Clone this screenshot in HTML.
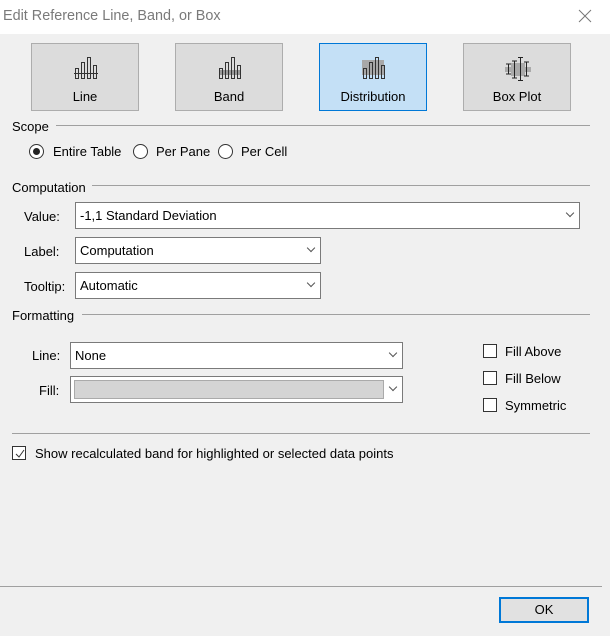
<!DOCTYPE html>
<html><head><style>
*{margin:0;padding:0;box-sizing:border-box}
body{width:610px;height:636px;background:#f0f0f0;font-family:"Liberation Sans",sans-serif;font-size:13px;color:#000;position:relative;overflow:hidden}
.a{position:absolute}
.title{left:0;top:0;width:610px;height:34px;background:#fff;}
.title span{position:absolute;left:3px;top:8px;font-size:14.4px;color:#7a7a7a}
.btn{position:absolute;top:43px;width:108px;height:68px;background:#dcdcdc;border:1px solid #adadad;text-align:center}
.btn .l{position:absolute;left:0;right:0;top:45px;font-size:13px}
.btn svg{position:absolute;left:41px;top:13px}
.sel{background:#c4e0f6;border:1px solid #0078d7}
.hd{font-size:13px}
.hr{height:1px;background:#a0a0a0}
.box{position:absolute;background:#fff;border:1px solid #7a7a7a;height:27px;padding:5px 4px;font-size:13px}
.box i{position:absolute;right:6px;top:7px;width:6px;height:6px;border-right:1px solid #555;border-bottom:1px solid #555;transform:rotate(45deg)}
.cb{position:absolute;width:14px;height:14px;border:1px solid #333;background:#fff}
.rb{position:absolute;width:15px;height:15px;border:1px solid #333;border-radius:50%;background:#fff}
</style></head><body>
<div class="a title"><span>Edit Reference Line, Band, or Box</span>
<svg class="a" style="left:578px;top:9px" width="14" height="14"><path d="M1 1L13 13M13 1L1 13" stroke="#777" stroke-width="1"/></svg></div>

<div class="btn" style="left:31px"><svg width="26" height="24"><g fill="none" stroke="#333"><rect x="2.5" y="11.5" width="3" height="10"/><rect x="8.5" y="5.5" width="3" height="16"/><rect x="14.5" y="0.5" width="3" height="21"/><rect x="20.5" y="8.5" width="3" height="13"/><path d="M1 16.5H25"/></g></svg><div class="l">Line</div></div>
<div class="btn" style="left:175px"><svg width="26" height="24"><rect x="2" y="13" width="22" height="5" fill="#999"/><g fill="none" stroke="#333"><rect x="2.5" y="11.5" width="3" height="10"/><rect x="8.5" y="5.5" width="3" height="16"/><rect x="14.5" y="0.5" width="3" height="21"/><rect x="20.5" y="8.5" width="3" height="13"/></g></svg><div class="l">Band</div></div>
<div class="btn sel" style="left:319px"><svg width="26" height="24"><rect x="1" y="3" width="22" height="15" fill="#a8a8a8"/><g fill="none" stroke="#333"><rect x="2.5" y="11.5" width="3" height="10"/><rect x="8.5" y="5.5" width="3" height="16"/><rect x="14.5" y="0.5" width="3" height="21"/><rect x="20.5" y="8.5" width="3" height="13"/></g></svg><div class="l">Distribution</div></div>
<div class="btn" style="left:463px"><svg width="26" height="24"><g fill="#aaa"><rect x="0" y="10" width="26" height="5"/><rect x="6" y="6" width="14" height="13"/></g><g stroke="#222" fill="none"><path d="M3.5 7V17M1 7H6M1 17H6M9.5 4V21M7 4H12M7 21H12M15.5 0V24M13 0.5H18M13 23.5H18M21.5 5V19M19 5H24M19 19H24"/></g></svg><div class="l">Box Plot</div></div>

<div class="a hd" style="left:12px;top:119px">Scope</div>
<div class="a hr" style="left:56px;top:125px;width:534px"></div>
<div class="rb" style="left:29px;top:144px"><div class="a" style="left:3px;top:3px;width:7px;height:7px;border-radius:50%;background:#222"></div></div>
<div class="a" style="left:53px;top:144px">Entire Table</div>
<div class="rb" style="left:133px;top:144px"></div>
<div class="a" style="left:156px;top:144px">Per Pane</div>
<div class="rb" style="left:218px;top:144px"></div>
<div class="a" style="left:241px;top:144px">Per Cell</div>

<div class="a hd" style="left:12px;top:180px">Computation</div>
<div class="a hr" style="left:92px;top:185px;width:498px"></div>
<div class="a" style="left:24px;top:209px">Value:</div>
<div class="box" style="left:75px;top:202px;width:505px">-1,1 Standard Deviation<i></i></div>
<div class="a" style="left:24px;top:244px">Label:</div>
<div class="box" style="left:75px;top:237px;width:246px">Computation<i></i></div>
<div class="a" style="left:24px;top:279px">Tooltip:</div>
<div class="box" style="left:75px;top:272px;width:246px">Automatic<i></i></div>

<div class="a hd" style="left:12px;top:308px">Formatting</div>
<div class="a hr" style="left:82px;top:314px;width:508px"></div>
<div class="a" style="left:32px;top:348px">Line:</div>
<div class="box" style="left:70px;top:342px;width:333px">None<i></i></div>
<div class="a" style="left:39px;top:383px">Fill:</div>
<div class="box" style="left:70px;top:376px;width:333px"><div class="a" style="left:3px;top:3px;width:310px;height:19px;background:#d4d4d4;border:1px solid #aaa"></div><i></i></div>
<div class="cb" style="left:483px;top:344px"></div><div class="a" style="left:505px;top:344px">Fill Above</div>
<div class="cb" style="left:483px;top:371px"></div><div class="a" style="left:505px;top:371px">Fill Below</div>
<div class="cb" style="left:483px;top:398px"></div><div class="a" style="left:505px;top:398px">Symmetric</div>

<div class="a hr" style="left:12px;top:433px;width:578px"></div>
<div class="cb" style="left:12px;top:446px"><svg class="a" style="left:1px;top:1px" width="12" height="12"><path d="M2 6L5 9L10 2" stroke="#333" fill="none"/></svg></div>
<div class="a" style="left:35px;top:446px">Show recalculated band for highlighted or selected data points</div>

<div class="a hr" style="left:0;top:586px;width:602px"></div>
<div class="a" style="left:499px;top:597px;width:90px;height:26px;background:#e1e1e1;border:2px solid #0078d7;text-align:center;line-height:22px">OK</div>
</body></html>
